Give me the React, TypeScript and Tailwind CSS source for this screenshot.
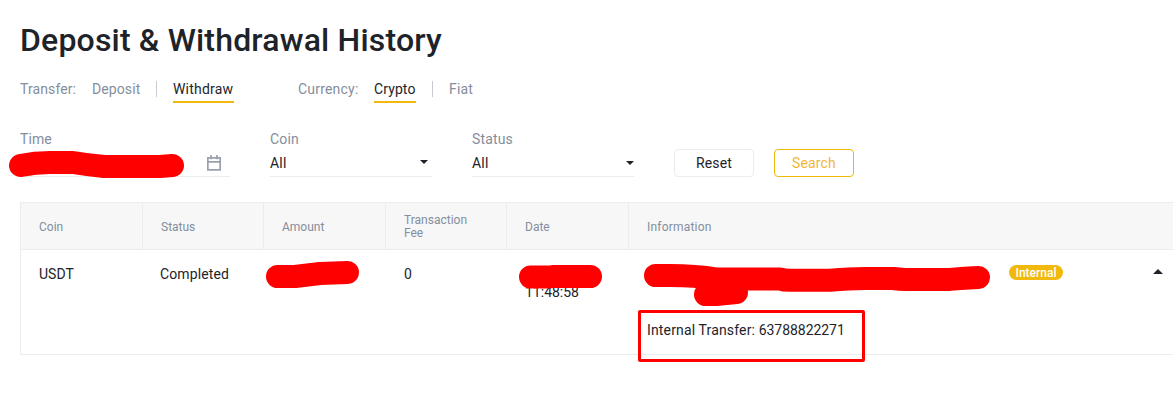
import React from "react";

const Caret = () => (
  <svg width="8" height="4" viewBox="0 0 8 4" className="block shrink-0" fill="#1e2329">
    <path d="M0 0H8L4 4Z" />
  </svg>
);

const CaretUp = () => (
  <svg width="10" height="5" viewBox="0 0 10 5" className="block shrink-0" fill="#1e2329">
    <path d="M5 0 10 5H0Z" />
  </svg>
);

const CalendarIcon = () => (
  <svg width="14" height="16" viewBox="0 0 14 16" className="block shrink-0" fill="none" stroke="#9aa1ae" strokeWidth="1.7">
    <path d="M.85 2.850h12.300v12H.850zM.850 6.850h12.300M4 0v4.200M10 0v4.200" />
  </svg>
);

const Select = ({ label, caret }: { label: string; caret: string }) => (
  <div className="flex h-[46px] w-[162px] flex-col border-b border-[#eaecef]">
    <span className="-mt-px h-[23px] leading-[18px] tracking-[0.15px] text-[#848e9c]">{label}</span>
    <div className="flex h-5 items-center justify-between">
      <span className="tracking-[0.2px]">All</span>
      <span className={caret}>
        <Caret />
      </span>
    </div>
  </div>
);

const headings = [
  { text: "Coin", cls: "w-[122px]" },
  { text: "Status", cls: "w-[121px]" },
  { text: "Amount", cls: "w-[122px]" },
  { text: "Transaction Fee", cls: "w-[121px]" },
  { text: "Date", cls: "w-[122px]" },
];

export default function App() {
  return (
    <main className="relative h-[408px] w-[1173px] overflow-hidden bg-white pl-5 font-['Roboto',sans-serif] text-[14px] text-[#1e2329]">
      <h1 className="flex h-20 items-center whitespace-nowrap text-[32px] font-medium tracking-[0.18px] text-[#1e2329]">
        Deposit &amp; Withdrawal History
      </h1>

      <nav className="flex h-[23px] whitespace-nowrap leading-[18px] text-[#848e9c]">
        <span className="w-[72px] tracking-[0.1px]">Transfer:</span>
        <span className="w-[64px] tracking-[0.1px]">Deposit</span>
        <span className="mt-px h-4 w-px bg-[#c8ccd2]" />
        <span className="ml-4 w-[61px] border-b-2 border-[#f0b90b] tracking-[0.2px] text-[#1e2329]">Withdraw</span>
        <span className="ml-[64px] w-[76px] tracking-[0.2px]">Currency:</span>
        <span className="w-[42px] border-b-2 border-[#f0b90b] tracking-[0.1px] text-[#1e2329]">Crypto</span>
        <span className="ml-4 mt-px h-4 w-px bg-[#c8ccd2]" />
        <span className="ml-4 tracking-[0.15px]">Fiat</span>
      </nav>

      <section className="mt-7 flex h-[46px] gap-10">
        <div className="flex w-[210px] flex-col border-b border-[#eaecef]">
          <span className="-mt-px h-[23px] leading-[18px] tracking-[0.1px] text-[#848e9c]">Time</span>
          <div className="flex h-5 items-center justify-end pr-[9px]">
            <CalendarIcon />
          </div>
        </div>
        <Select label="Coin" caret="mr-1 -mt-[3px]" />
        <Select label="Status" caret="" />
        <div className="flex gap-5 pt-[18px]">
          <button className="h-7 w-20 rounded border border-[#eaecef] tracking-[0.15px]">Reset</button>
          <button className="h-7 w-20 rounded border border-[#f0b90b] tracking-[0.15px] text-[#f0b73a]">Search</button>
        </div>
      </section>

      <section className="mt-[25px] h-[153px] border-y border-l border-[#eaecef]">
        <div className="flex h-[47px] border-b border-[#eaecef] bg-[#f7f7f7] text-[12px] leading-[13px] text-[#848e9c]">
          {headings.map((h) => (
            <div key={h.text} className={`flex shrink-0 items-center border-r border-[#eaecef] pl-[18px] pr-6 pt-0.5 ${h.cls}`}>
              {h.text}
            </div>
          ))}
          <div className="flex items-center pl-[18px] pt-0.5 tracking-[0.2px]">Information</div>
        </div>
        <div className="flex pt-[15px] leading-[18px]">
          <span className="w-[122px] pl-[18px]">USDT</span>
          <span className="w-[121px] pl-[17px] tracking-[0.12px]">Completed</span>
          <span className="w-[122px]" />
          <span className="w-[121px] pl-[18px]">0</span>
          <span className="w-[122px] pl-[18px] pt-[18px]">11:48:58</span>
          <div className="flex w-[544px] flex-col pl-[18px]">
            <div className="flex h-14 items-start justify-between pl-[362px] pr-[10px]">
              <span className="h-[15px] w-[54px] rounded-full bg-[#f0b90b] text-center text-[12px] font-medium leading-[16px] text-white">
                Internal
              </span>
              <span className="pt-1">
                <CaretUp />
              </span>
            </div>
            <span className="whitespace-pre">
              <span className="tracking-[0.15px]">Internal Transfer: </span>
              <span className="tracking-[-0.05px]">63788822271</span>
            </span>
          </div>
        </div>
      </section>

      <svg width="1173" height="408" viewBox="0 0 1173 408" className="pointer-events-none absolute left-0 top-0" fill="none" stroke="#ff0000" strokeWidth="23" strokeLinecap="round" strokeLinejoin="round">
        <path d="M20.500 165.500Q35 162.500 50 162.500H73Q88 165 104 166.500H160L172.500 165.500" />
        <path d="M277.500 276.500H295L320 273.500 347.500 272.500" />
        <path d="M530.500 277H550L553 276.500H590.500" />
        <path d="M655.500 275.500H670Q695 275.500 717 279H780Q784 280.300 790 280.300H830Q850 278.500 865 278.500H893Q900 279.400 905 279.400H950Q965 278 978.500 277.500" />
        <path d="M705.500 294.500H716L736.500 292.500" />
      </svg>
      <div className="absolute left-[638px] top-[310px] h-[52px] w-[227px] rounded-[2px] border-3 border-[#ff0000]" />
    </main>
  );
}
